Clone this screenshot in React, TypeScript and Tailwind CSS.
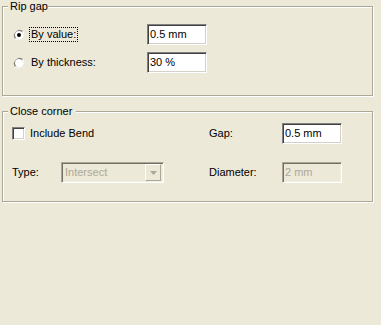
import React from "react";

const sunken =
  "border border-t-[#808080] border-l-[#808080] border-b-white border-r-white shadow-[inset_1px_1px_0_#404040,inset_-1px_-1px_0_#d4d0c8]";
const sunkenDisabled =
  "border border-t-[#aca899] border-l-[#aca899] border-b-white border-r-white shadow-[inset_1px_1px_0_#716f64,inset_-1px_-1px_0_#f1efe2]";

function Radio({ checked }: { checked?: boolean }) {
  return (
    <svg width="12" height="12" viewBox="0 0 12 12" className="shrink-0">
      <path d="M2.2 9.8 A5.5 5.5 0 0 1 9.8 2.2" fill="none" stroke="#808080" strokeWidth="1" />
      <path d="M9.8 2.2 A5.5 5.5 0 0 1 2.2 9.8" fill="none" stroke="#ffffff" strokeWidth="1" />
      <path d="M2.9 9.1 A4.5 4.5 0 0 1 9.1 2.9" fill="none" stroke="#404040" strokeWidth="1" />
      <path d="M9.1 2.9 A4.5 4.5 0 0 1 2.9 9.1" fill="none" stroke="#d4d0c8" strokeWidth="1" />
      <circle cx="6" cy="6" r="4" fill="#ffffff" />
      {checked && <circle cx="6" cy="6" r="2" fill="#000000" />}
    </svg>
  );
}

function Group({ title, h, children, titleW }: { title: string; h: string; children: React.ReactNode; titleW: string }) {
  return (
    <div
      className={`relative w-[371px] ${h} border border-[#aca899] shadow-[inset_1px_1px_0_#ffffff,1px_1px_0_#ffffff]`}
    >
      <span className={`absolute left-[5px] top-[-8px] ${titleW} bg-[#ece9d8] pl-[2px] text-[11px] leading-[14px] text-black`}>
        {title}
      </span>
      {children}
    </div>
  );
}

export default function App() {
  return (
    <div
      className="w-[381px] h-[325px] bg-[#ece9d8] pt-[6px] pl-[2px] text-[11px] text-black"
      style={{ fontFamily: '"Liberation Sans", Arial, sans-serif' }}
    >
      <Group title="Rip gap" h="h-[90px]" titleW="w-[40px]">
        <div className="flex flex-col gap-[7px] pt-[17px] pl-[10px]">
          <div className="flex items-center h-[21px]">
            <div className="flex items-center w-[134px]">
              <Radio checked />
              <span className="ml-[4px] px-[1px] border border-dotted border-black leading-[13px]">By value:</span>
            </div>
            <div className={`w-[60px] h-[21px] bg-white ${sunken} flex items-center pl-[2px] leading-none`}>0.5 mm</div>
          </div>
          <div className="flex items-center h-[21px]">
            <div className="flex items-center w-[134px]">
              <Radio />
              <span className="ml-[6px] leading-[13px]">By thickness:</span>
            </div>
            <div className={`w-[60px] h-[21px] bg-white ${sunken} flex items-center pl-[2px] leading-none`}>30 %</div>
          </div>
        </div>
      </Group>

      <div className="mt-[15px]">
        <Group title="Close corner" h="h-[91px]" titleW="w-[68px]">
          <div className="flex flex-col gap-[18px] pt-[11px] pl-[9px]">
            <div className="flex items-center h-[21px]">
              <div className="flex items-center w-[197px]">
                <div className={`w-[13px] h-[13px] bg-white ${sunken}`} />
                <span className="ml-[5px]">Include Bend</span>
              </div>
              <span className="w-[73px]">Gap:</span>
              <div className={`w-[60px] h-[21px] bg-white ${sunken} flex items-center pl-[2px] leading-none`}>0.5 mm</div>
            </div>
            <div className="flex items-center h-[21px]">
              <span className="w-[49px]">Type:</span>
              <div className={`w-[103px] h-[21px] ${sunkenDisabled} flex items-center justify-between p-[2px]`}>
                <span className="pl-[1px] text-[#aca899]">Intersect</span>
                <div className="w-[16px] h-[17px] border border-t-white border-l-white border-b-[#aca899] border-r-[#aca899] flex items-center justify-center">
                  <svg width="7" height="4" viewBox="0 0 7 4">
                    <path d="M0 0 H7 L3.5 4 Z" fill="#aca899" />
                  </svg>
                </div>
              </div>
              <span className="w-[45px]" />
              <span className="w-[73px]">Diameter:</span>
              <div className={`w-[60px] h-[21px] ${sunkenDisabled} flex items-center pl-[2px] leading-none text-[#aca899]`}>2 mm</div>
            </div>
          </div>
        </Group>
      </div>
    </div>
  );
}
